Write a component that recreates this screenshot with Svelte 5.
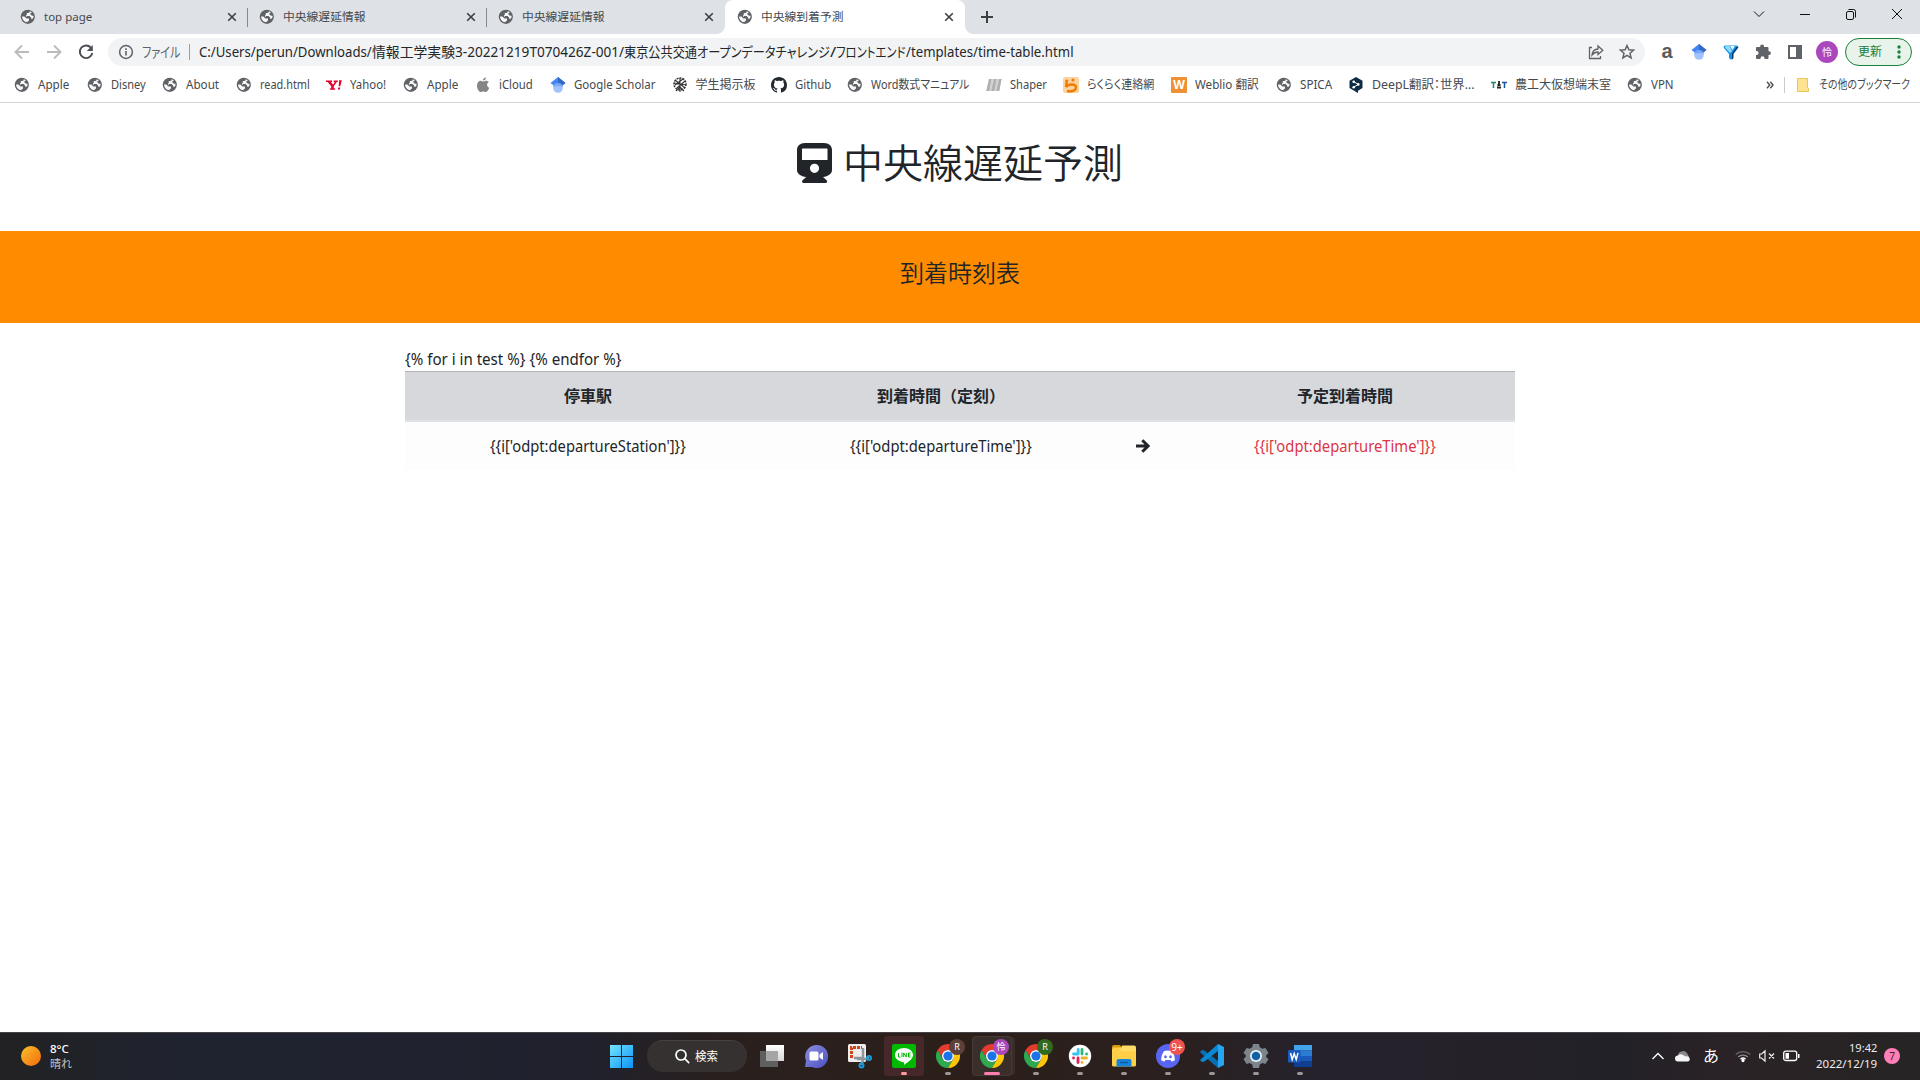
<script>
  const tabs = [
    { title: 'top page', width: 48, slot: 240 },
    { title: '中央線遅延情報', width: 83, slot: 239 },
    { title: '中央線遅延情報', width: 83, slot: 238 },
    { title: '中央線到着予測', width: 83, slot: 240, active: true }
  ];

  const address = [
    { text: 'C:/Users/perun/Downloads/', width: 173 },
    { text: '情報工学実験', width: 83 },
    { text: '3-20221219T070426Z-001/', width: 169 },
    { text: '東京公共交通オープンデータチャレンジ', width: 206 },
    { text: '/', width: 6 },
    { text: 'フロントエンド', width: 70 },
    { text: '/templates/time-table.html', width: 168 }
  ];

  const bookmarks = [
    { text: 'Apple', width: 31, slot: 72.5, icon: 'globe' },
    { text: 'Disney', width: 35, slot: 75.5, icon: 'globe' },
    { text: 'About', width: 33, slot: 74, icon: 'globe' },
    { text: 'read.html', width: 50, slot: 90, icon: 'globe' },
    { text: 'Yahoo!', width: 36, slot: 77, icon: 'yahoo' },
    { text: 'Apple', width: 31, slot: 72, icon: 'globe' },
    { text: 'iCloud', width: 34, slot: 75, icon: 'apple' },
    { text: 'Google Scholar', width: 81, slot: 121.5, icon: 'scholar' },
    { text: '学生掲示板', width: 60, slot: 99.5, icon: 'crest' },
    { text: 'Github', width: 36, slot: 76, icon: 'github' },
    { text: 'Word数式マニュアル', width: 98, slot: 139, icon: 'globe' },
    { text: 'Shaper', width: 37, slot: 77, icon: 'shaper' },
    { text: 'らくらく連絡網', width: 67, slot: 108, icon: 'raku' },
    { text: 'Weblio 翻訳', width: 64, slot: 105, icon: 'weblio' },
    { text: 'SPICA', width: 32, slot: 72, icon: 'globe' },
    { text: 'DeepL翻訳：世界...', width: 103, slot: 143, icon: 'deepl' },
    { text: '農工大仮想端末室', width: 96, slot: 135.5, icon: 'tat' },
    { text: 'VPN', width: 23, slot: 60, icon: 'globe' }
  ];

  const extensions = ['a', 'scholar', 'vee', 'puzzle', 'panel'];

  const apps = [
    { icon: 'taskview' },
    { icon: 'chat' },
    { icon: 'snip' },
    { icon: 'line', state: 'alert' },
    { icon: 'chrome', badge: 'R', tone: 'brown', state: 'open' },
    { icon: 'chrome', badge: '怜', tone: 'purple', state: 'current' },
    { icon: 'chrome', badge: 'R', tone: 'green', state: 'open' },
    { icon: 'slack', state: 'open' },
    { icon: 'folder', state: 'open' },
    { icon: 'discord', badge: '9+', tone: 'red', state: 'open' },
    { icon: 'vscode', state: 'open' },
    { icon: 'gear', state: 'open' },
    { icon: 'word', state: 'open' }
  ];

  // Condenses or widens a label so that it fills the width of its box.
  function fit(node) {
    const natural = node.offsetWidth;
    const target = node.parentElement.clientWidth;
    if (natural) node.style.transform = `scaleX(${target / natural})`;
  }
</script>

{#snippet label(text, width)}
  <span class="label" style:width="{width}px"><span class="ink" use:fit>{text}</span></span>
{/snippet}

{#snippet glyph(name)}
  {#if name === 'globe'}
    <svg width="16" height="16" viewBox="0 0 16 16"><circle cx="7.800" cy="7.800" r="7.100" fill="#5f6368" /><path d="M9.800 2.300Q9.800 4 8.300 4H6.800v1.500q0 .8-.8.900v1.500h4.300q.8 0 .8.800v1h1.100q.7 0 1-.600.500-1 .300-2.400H12L10.300 5.200V4.300q1.300-.1 1.500-.800-.900-.8-2-1.200z" fill="#fff" opacity=".95" /><path d="M2.100 7.600l.1 1.500 1 1.800q1.400 2.200 4.500 2.400v-1.200q1.300 0 1.300-1.200V9.400H6.400L4.400 7.600z" fill="#fff" opacity=".95" /><path d="M6.300 7.100h3.300l1.300 1.400H7.400z" fill="#5f6368" /></svg>
  {:else if name === 'yahoo'}
    <svg width="16" height="16" viewBox="0 0 16 16"><path d="M0 3.500h6v1.400l-1 .1 2 2.800 1.800-2.800-1.100-.1V3.500h4.100v1.400l-1 .2-3 4.100v2l1.300.2v1.300H3.900v-1.300l1.300-.2v-2L1.600 5.100 0 4.900zM13.100 3.300h2.700l-1.500 6h-1.600zM12.300 10.500h2l-.4 2h-2z" fill="#e5002d" /></svg>
  {:else if name === 'apple'}
    <svg width="16" height="16" viewBox="0 0 16 16"><path d="M10.800.4c.2 1.600-1.200 3.200-2.800 3.100C7.800 2 9.200.6 10.800.4zM8.200 4.500c.7 0 1.500-.8 2.800-.8 1.200 0 2.100.6 2.700 1.400-2.400 1.500-2 4.700.5 5.600-.6 1.700-1.900 4.300-3.400 4.300-.9 0-1.400-.6-2.500-.6s-1.600.6-2.500.6C3.800 15 2 11.500 2 8.700c0-3.200 1.900-5 3.900-5 1 0 1.700.8 2.300.8z" fill="#858585" /></svg>
  {:else if name === 'scholar'}
    <svg width="16" height="16" viewBox="0 0 16 16"><circle cx="8" cy="11" r="4.800" fill="#a0c3ff" /><path d="M.5 6 8 0l7.500 6-3.500 2.800a4.800 4.800 0 0 0-8 0z" fill="#4285f4" /><path d="M8 0l7.500 6-3.500 2.800A5 5 0 0 0 8 6.200z" fill="#356ac3" /><path d="M3.200 9.900a4.900 4.900 0 0 1 9.600 0Q8 8 3.200 9.900z" fill="#76a7fa" /></svg>
  {:else if name === 'crest'}
    <svg width="16" height="16" viewBox="0 0 16 16" fill="none" stroke="#333"><circle cx="8" cy="7" r="6" stroke-width="1.500" stroke-dasharray="2 1" /><path d="M3 3l10 8M3 8l8-6M5 11l8-7M8 1v14M2 6l12 2M4 14l4-4 4 4" stroke-width="1.100" /></svg>
  {:else if name === 'github'}
    <svg width="16" height="16" viewBox="0 0 16 16"><path fill="#24292f" d="M8 0C3.580 0 0 3.580 0 8c0 3.540 2.290 6.530 5.470 7.590.4.070.55-.17.55-.38 0-.19-.01-.82-.01-1.490-2.010.37-2.530-.49-2.690-.94-.09-.23-.48-.94-.82-1.130-.28-.15-.68-.52-.01-.53.63-.01 1.080.58 1.230.82.72 1.210 1.870.87 2.330.66.070-.52.28-.87.51-1.070-1.780-.2-3.640-.89-3.640-3.950 0-.87.31-1.590.82-2.150-.08-.2-.36-1.020.08-2.120 0 0 .67-.21 2.200.82.64-.18 1.320-.27 2-.27s1.360.09 2 .27c1.530-1.040 2.200-.82 2.200-.82.44 1.100.16 1.920.08 2.120.51.56.82 1.270.82 2.150 0 3.070-1.870 3.750-3.650 3.950.29.25.54.73.54 1.480 0 1.070-.01 1.930-.01 2.200 0 .21.15.46.55.38A8 8 0 0 0 16 8c0-4.420-3.580-8-8-8z" /></svg>
  {:else if name === 'shaper'}
    <svg width="16" height="16" viewBox="0 0 16 16"><path d="M3 2h12.500l-2.300 12H.3z" fill="#d4d4d4" /><path d="M3 2h2.500L3.300 14h-3zM8 2h2.500L8.300 14h-3zM13 2h2.500l-2.200 12h-3z" fill="#b0b0b0" /></svg>
  {:else if name === 'raku'}
    <svg width="16" height="16" viewBox="0 0 16 16"><rect width="16" height="16" rx="2" fill="#fbd3a0" /><circle cx="10" cy="3" r="1.600" fill="#f07c00" /><path d="M2.500 3.200 5 4.500M3.600 5.200 3 10c2-3 10-3.700 10 .3C13 14 8 14.700 4 14" fill="none" stroke="#f07c00" stroke-width="2.400" /></svg>
  {:else if name === 'weblio'}
    <span class="tile">W</span>
  {:else if name === 'deepl'}
    <svg width="16" height="16" viewBox="0 0 16 16"><path d="M8 0l6.500 3.700v7.400L10 13.700V16l-3-1.700-5.500-3.200V3.700z" fill="#0f2b46" /><path d="M5.500 4.500 10.300 7.400 5.500 10.300" fill="none" stroke="#fff" /><g fill="#fff"><circle cx="5.700" cy="4.700" r="1.300" /><circle cx="10.300" cy="7.400" r="1.300" /><circle cx="5.700" cy="10.200" r="1.300" /></g></svg>
  {:else if name === 'tat'}
    <svg width="16" height="16" viewBox="0 0 16 16"><path d="M0 5.500h5M2.500 5v6" stroke="#16876a" stroke-width="1.500" /><path d="M11 5.500h5M13.500 5v6" stroke="#1b5599" stroke-width="1.500" /><path d="M8 4v3M6 10.500h4M6.500 8h3" stroke="#222" stroke-width="1.800" /></svg>
  {:else if name === 'vee'}
    <svg width="16" height="16" viewBox="0 0 16 16"><path d="M2.500 1.500h11q2.500 0 1.700 2.500L10.500 10v4l-2 1.500h-1L6 14v-4L1 4Q0 1.500 2.500 1.500z" fill="#1491e8" /><path d="M2.500 2h4L9 7 7 9 2 3.500z" fill="#8ddcff" /><path d="M7 2h5L9.500 6z" fill="#eafaff" /><path d="M15.200 3l-5 7v4.500l-1.200.8V9.500l4.500-6.500z" fill="#06335a" /></svg>
  {:else if name === 'puzzle'}
    <svg width="16" height="16" viewBox="0 0 16 16"><path d="M5.200 3V2.300a1.900 1.900 0 0 1 3.800 0V3h3.500q1 0 1 1v3.200h.5a1.900 1.900 0 0 1 0 3.800h-.5V14q0 1-1 1H9.500v-.8a2 2 0 0 0-4 0v.8H2q-1 0-1-1v-3h.6a2 2 0 0 0 0-4H1V4q0-1 1-1z" fill="#5f6368" /></svg>
  {:else if name === 'panel'}
    <svg width="16" height="16" viewBox="0 0 16 16"><path d="M1 1h14v14H1zM3 3v10h6V3z" fill="#5f6368" fill-rule="evenodd" /></svg>
  {:else if name === 'a'}
    <span class="letter-a">a</span>
  {/if}
{/snippet}

{#snippet app(name)}
  <svg width="24" height="24" viewBox="0 0 24 24">
    {#if name === 'taskview'}
      <defs><linearGradient id="tv" x2="0" y2="1"><stop stop-color="#fff" /><stop offset="1" stop-color="#d6d6d6" /></linearGradient></defs>
      <path d="M6 1h18v16H6z" fill="url(#tv)" /><path d="M0 7h18v16H0z" fill="#5f5f5f" /><path d="M6 7h12v10H6z" fill="#a5a5a5" />
    {:else if name === 'chat'}
      <defs><linearGradient id="ch" x2="1" y2="1"><stop stop-color="#8c8fdc" /><stop offset="1" stop-color="#4b50c5" /></linearGradient></defs>
      <path d="M12 1a11.500 11.500 0 1 1-4 22L1 23l1-6A11.500 11.500 0 0 1 12 1z" fill="url(#ch)" /><rect x="5.500" y="7.500" width="9" height="9" rx="1.500" fill="#fff" /><path d="M15.500 10.500 19 8v8l-3.500-2.500z" fill="#fff" />
    {:else if name === 'snip'}
      <rect width="18" height="18" rx="1.500" fill="#eee" /><path d="M3.500 14V3.500H14" fill="none" stroke="#d34519" stroke-width="3" stroke-dasharray="3 1" /><path d="M6 14l8 0M15 4v12l-2 5M9 15h9l3-2" fill="none" stroke="#8f979c" stroke-width="2.500" /><g fill="none" stroke="#169bdc" stroke-width="2"><circle cx="21" cy="14" r="2" /><circle cx="13.500" cy="21.500" r="2" /></g>
    {:else if name === 'line'}
      <rect width="24" height="24" rx="2" fill="#00b900" /><path d="M12 4c5 0 9 3 9 7 0 4-5 7-9 10 0-1 .5-3-1-3-4-.5-8-3-8-7s4-7 9-7z" fill="#fff" /><path d="M6.500 9v4h2M10 8.500V13M11.700 13V9l2.600 4V9M18.500 9h-2v4h2M16.500 11h2" fill="none" stroke="#00b900" />
    {:else if name === 'chrome'}
      <path d="M1.600 6A12 12 0 0 1 22.400 6H12A6 6 0 0 0 6.800 15z" fill="#e33b2e" /><path d="M1.600 6A12 12 0 0 0 12 24l5.200-9A6 6 0 0 1 6.800 15z" fill="#2da94f" /><path d="M22.400 6A12 12 0 0 1 12 24l5.200-9A6 6 0 0 0 12 6z" fill="#fdc60a" /><circle cx="12" cy="12" r="6" fill="#fff" /><circle cx="12" cy="12" r="4.600" fill="#1a73e8" />
    {:else if name === 'slack'}
      <circle cx="12" cy="12" r="11.200" fill="#fff" /><g fill="none" stroke-width="2.800" stroke-linecap="round"><path d="M10.200 5.500v4.500M5.500 10h4.500" stroke="#36c5f0" /><path d="M14 5.500v4.500M18.500 10h.1" stroke="#2eb67d" /><path d="M14 14h4.500M14 18.500v.1" stroke="#ecb22e" /><path d="M10 14v4.500M5.500 14h.1" stroke="#e01e5a" /></g>
    {:else if name === 'folder'}
      <path d="M0 3q0-2 2-2h6l2 3H0z" fill="#d99a09" /><rect y="3.500" width="24" height="19" rx="1.500" fill="#ffcf48" /><path d="M10 1.500h12q2 0 2 2V7H8z" fill="#ffdb6a" /><path d="M4.500 22.500V17q0-2 2-2h11q2 0 2 2v5.500z" fill="#1683d8" /><path d="M8 18.500h8" stroke="#0b5ba5" stroke-width="1.500" />
    {:else if name === 'discord'}
      <circle cx="12" cy="12" r="12" fill="#5865f2" /><path d="M8 7q4-1 8 0 3 4 3 9-2 1.500-3.500 1.500L14.500 16h-5l-1 1.500Q7 17.500 5 16q0-5 3-9z" fill="#fff" /><g fill="#5865f2"><ellipse cx="9.500" cy="12.800" rx="1.300" ry="1.500" /><ellipse cx="14.500" cy="12.800" rx="1.300" ry="1.500" /></g>
    {:else if name === 'vscode'}
      <path d="M0 8l2-2 2.500.5L18 17v7L2.500 10.500z" fill="#0870b4" /><path d="M18 0v7L4.500 17.500 2 18l-2-2z" fill="#0a88d4" /><path d="M18 0l6 3v18l-6 3z" fill="#27a5ee" />
    {:else if name === 'gear'}
      <path d="M9 0h6l.8 3.300 2.600 1.500L21.500 4l3 5-2.300 2.300v2L24.500 15l-3 5-3.100-.9-2.600 1.500L15 24H9l-.8-3.400-2.600-1.500L2.500 20l-3-5 2.300-2.200v-1.600L-.5 9l3-5 3.100.8 2.600-1.500z" fill="#7c858b" /><circle cx="12" cy="12" r="6" fill="#eef3f6" /><circle cx="12" cy="12" r="4.300" fill="#1061a8" />
    {:else if name === 'word'}
      <path d="M6 1h18v5.500H6z" fill="#41a5ee" /><path d="M6 6.500h18V12H6z" fill="#2b7cd3" /><path d="M6 12h18v5.500H6z" fill="#185abd" /><path d="M6 17.500h18V23H6z" fill="#103f91" /><rect y="6" width="12.500" height="12.500" rx="1" fill="#185abd" /><path d="M2.500 9l1.700 6.500L6.200 9.500l2 6L10 9" fill="none" stroke="#fff" stroke-width="1.500" />
    {/if}
  </svg>
{/snippet}

<div class="screen">
  <header class="tabstrip">
    {#each tabs as tab, i}
      <div class="tab" class:active={tab.active} class:divided={i < 2} style:width="{tab.slot}px">
        {@render glyph('globe')}
        {@render label(tab.title, tab.width)}
        <svg class="close" width="10" height="10" viewBox="0 0 10 10"><path d="M1.200 1.200l7.600 7.600M8.800 1.200L1.200 8.800" stroke="#3c4043" stroke-width="1.600" /></svg>
      </div>
    {/each}
    <svg class="newtab" width="14" height="14" viewBox="0 0 14 14"><path d="M7 1v12M1 7h12" stroke="#3c4043" stroke-width="2" /></svg>
    <div class="window-controls">
      <svg width="12" height="12" viewBox="0 0 12 12"><path d="M1 3.500l5 5 5-5" /></svg>
      <svg width="12" height="12" viewBox="0 0 12 12"><path d="M1 6.500h10" /></svg>
      <svg width="12" height="12" viewBox="0 0 12 12"><rect x="1.500" y="3.500" width="7" height="8" rx="1.500" /><path d="M3.500 1.500h5q2 0 2 2v6" /></svg>
      <svg width="12" height="12" viewBox="0 0 12 12"><path d="M1 1l10 10M11 1L1 11" /></svg>
    </div>
  </header>

  <div class="toolbar">
    <div class="nav">
      <svg class="dim" width="16" height="16" viewBox="0 0 16 16"><path d="M15 8H2M8 1.500L1.500 8 8 14.500" /></svg>
      <svg class="dim" width="16" height="16" viewBox="0 0 16 16"><path d="M1 8h13M8 1.500L14.500 8 8 14.500" /></svg>
      <svg width="16" height="16" viewBox="0 0 16 16"><path d="M13.300 4.200A6.300 6.300 0 1 0 14.300 9" /><path d="M14.800 1v6h-6z" fill="#4c5054" stroke="none" /></svg>
    </div>
    <div class="omnibox">
      <svg width="16" height="16" viewBox="0 0 16 16"><circle cx="8" cy="8" r="6.400" fill="none" stroke="#5f6368" stroke-width="1.500" /><path d="M8 7v4.500M8 4.300V6" stroke="#5f6368" stroke-width="1.600" /></svg>
      <div class="scheme">{@render label('ファイル', 38)}</div>
      <div class="url">
        {#each address as part}{@render label(part.text, part.width)}{/each}
      </div>
      <svg class="share" width="16" height="16" viewBox="0 0 16 16"><path d="M4 3.500H1.500v11h11V12M4 11q.5-5.500 6-6V2l4.800 4.200L10 10.500V8Q6.500 8 4 11z" /></svg>
      <svg class="star" width="16" height="16" viewBox="0 0 16 16"><path d="M8 1.500l1.900 4.300 4.700.4-3.600 3.100 1.100 4.600L8 11.400l-4.100 2.500L5 9.300 1.400 6.200l4.700-.4z" /></svg>
    </div>
    <div class="extensions">
      {#each extensions as name}<span class="ext">{@render glyph(name)}</span>{/each}
      <span class="ext"><span class="avatar">怜</span></span>
    </div>
    <div class="update">
      {@render label('更新', 24)}
      <svg width="4" height="16" viewBox="0 0 4 16" fill="#188038"><circle cx="2" cy="3" r="1.700" /><circle cx="2" cy="8" r="1.700" /><circle cx="2" cy="13" r="1.700" /></svg>
    </div>
  </div>

  <div class="bookmarks">
    {#each bookmarks as mark}
      <div class="bookmark" style:width="{mark.slot}px">
        {@render glyph(mark.icon)}
        {@render label(mark.text, mark.width)}
      </div>
    {/each}
    <div class="other">
      <svg width="8" height="8" viewBox="0 0 8 8"><path d="M1 .7L3.700 4 1 7.300M4.300.7L7 4 4.300 7.300" fill="none" stroke="#4c5054" stroke-width="1.400" /></svg>
      <div class="folder">
        <svg width="12" height="14" viewBox="0 0 12 14"><path d="M.5.500h10v9l1 1v3H.5z" fill="#ffe391" stroke="#e8c65a" /></svg>
        {@render label('その他のブックマーク', 91)}
      </div>
    </div>
  </div>

  <main>
    <h1>
      <svg width="35" height="40" viewBox="0 0 35 40"><path fill="#212529" fill-rule="evenodd" d="M8 0h19c5 0 8 3 8 7v20c0 4-4 6.500-9 7l3.700 3.300c1 1.200.3 2.700-1 2.700H6.500c-1.300 0-2-1.500-1-2.700L9.200 34C4 33.500 0 31 0 27V7c0-4 3-7 8-7zM5.500 5.500Q5 5.500 5 6V16.500q0 .5.500.5h24.500q.5 0 .5-.5V6q0-.5-.5-.5zM17.500 20.700a4.600 4.600 0 1 0 0 9.200 4.600 4.600 0 0 0 0-9.200z" /></svg>
      {@render label('中央線遅延予測', 280)}
    </h1>
    <div class="banner"><h4>到着時刻表</h4></div>
    <section class="content">
      <div class="template">{@render label('{% for i in test %} {% endfor %}', 217)}</div>
      <div class="row head">
        <span>停車駅</span><span>到着時間（定刻）</span><span></span><span>予定到着時間</span>
      </div>
      <div class="row">
        <span>{@render label("{{i['odpt:departureStation']}}", 196)}</span>
        <span>{@render label("{{i['odpt:departureTime']}}", 182)}</span>
        <span><svg width="14" height="14" viewBox="0 0 14 14"><path d="M0 7h12M6.300 1.200L12.100 7l-5.800 5.800" fill="none" stroke="#212529" stroke-width="3" /></svg></span>
        <span class="late">{@render label("{{i['odpt:departureTime']}}", 182)}</span>
      </div>
    </section>
  </main>

  <footer class="taskbar">
    <div class="weather">
      <i class="sun"></i>
      <div><b>8°C</b><small>晴れ</small></div>
    </div>
    <div class="dock">
      <span class="slot start"><svg width="23" height="23" viewBox="0 0 23 23"><defs><linearGradient id="win" x2="1" y2="1"><stop stop-color="#74e6ff" /><stop offset="1" stop-color="#0a92f5" /></linearGradient></defs><path d="M0 0h11v11H0zM12 0h11v11H12zM0 12h11v11H0zM12 12h11v11H12z" fill="url(#win)" /></svg></span>
      <div class="search">
        <svg width="15" height="15" viewBox="0 0 15 15" fill="none" stroke="#fff" stroke-width="1.700"><circle cx="6" cy="6" r="5" /><path d="M9.700 9.700l4.500 4.500" /></svg>
        {@render label('検索', 23)}
      </div>
      {#each apps as item}
        <span class="slot {item.state}">
          {@render app(item.icon)}
          {#if item.badge}<em class={item.tone}>{item.badge}</em>{/if}
        </span>
      {/each}
    </div>
    <div class="tray">
      <svg width="12" height="12" viewBox="0 0 12 12"><path d="M.5 9L6 3.500 11.500 9" fill="none" stroke="#fff" stroke-width="1.300" /></svg>
      <svg class="cloud" width="16" height="12" viewBox="0 0 16 12"><path d="M3 6a5 4.500 0 0 1 9-3l2 4H4z" fill="#8b8888" /><path d="M3 11.500a3 3 0 0 1 0-6 4 4 0 0 1 5-.5l3 1.500a2.600 2.600 0 1 1 2 5z" fill="#f5f5f5" /></svg>
      <span class="ime">あ</span>
      <svg class="wifi" width="16" height="12" viewBox="0 0 16 12" fill="none" stroke="#aaa" stroke-width="1.300"><path d="M.8 4.500a10.500 10.500 0 0 1 14.400 0" stroke="#6b6767" /><path d="M3.200 7a7 7 0 0 1 9.600 0" stroke="#8e8a8a" /><path d="M5.500 9.200a3.600 3.600 0 0 1 5 0" stroke="#fff" /><circle cx="8" cy="10.500" r="1" fill="#fff" stroke="#fff" /></svg>
      <svg class="sound" width="16" height="12" viewBox="0 0 16 12" fill="none" stroke="#eee" stroke-width="1.200"><path d="M.7 4h2L6 .8v10.400L2.700 8h-2zM10 3.500l5 5M15 3.500l-5 5" /></svg>
      <svg class="battery" width="17" height="12" viewBox="0 0 17 12"><rect x=".7" y="1.200" width="13" height="9.300" rx="2" fill="none" stroke="#fff" stroke-width="1.300" /><path d="M2.500 3H6v5.700H2.500zM15 4h1.500v4H15z" fill="#fff" /></svg>
      <div class="clock">{@render label('19:42', 28)}{@render label('2022/12/19', 61)}</div>
      <span class="notice">7</span>
    </div>
  </footer>
</div>

<style>
  :global(body) { margin: 0; overflow: hidden; }
  .screen {
    width: 1920px;
    height: 1080px;
    display: flex;
    flex-direction: column;
    background: #fff;
    color: #212529;
    font-family: "Noto Sans", "Noto Sans CJK JP", sans-serif;
    font-size: 12px;
    line-height: 16px;
  }
  .screen * { box-sizing: border-box; }
  svg { display: block; flex: none; overflow: visible; }
  .label { display: inline-flex; flex: none; white-space: nowrap; }
  .ink { flex: none; transform-origin: 0 50%; font-feature-settings: "palt"; }

  .tabstrip { height: 34px; flex: none; display: flex; align-items: center; padding-left: 8px; background: #dee1e6; }
  .tab { height: 34px; display: flex; flex: none; align-items: center; gap: 8px; padding: 0 11px 0 12px; color: #45494d; font-size: 11.500px; }
  .tab + .tab:not(.active) { padding-left: 11px; }
  .divided { background: linear-gradient(#85888c, #85888c) right center / 1px 19px no-repeat; }
  .tab .close { margin-left: auto; }
  .active { position: relative; background: #fff; border-radius: 8px 8px 0 0; }
  .active::before, .active::after { content: ""; position: absolute; bottom: 0; width: 8px; height: 8px; }
  .active::before { left: -8px; background: radial-gradient(circle at 0 0, transparent 7.500px, #fff 8px); }
  .active::after { right: -8px; background: radial-gradient(circle at 100% 0, transparent 7.500px, #fff 8px); }
  .newtab { margin-left: 15px; }
  .window-controls { display: flex; gap: 34px; margin: 0 17px 6px auto; }
  .window-controls svg { fill: none; stroke: #111; }

  .toolbar { height: 36px; flex: none; display: flex; align-items: center; }
  .nav { width: 108px; display: flex; gap: 16px; padding-left: 14px; }
  .nav svg { fill: none; stroke: #4c5054; stroke-width: 1.900; }
  .nav .dim { stroke: #b9bbbd; }
  .omnibox { width: 1537px; height: 28px; display: flex; align-items: center; padding: 0 10px; border-radius: 14px; background: #f1f3f4; font-size: 14px; }
  .scheme { display: flex; width: 56px; height: 16px; padding-left: 8px; margin-right: 9px; color: #5f6368; border-right: 1px solid #9a9da1; }
  .url { display: flex; align-items: center; color: #24272a; }
  .share, .star { fill: none; stroke: #5f6368; stroke-width: 1.300; }
  .share { margin-left: auto; }
  .star { margin-left: 15px; }
  .star path { stroke-width: 1.500; }
  .extensions { display: flex; margin-left: 6px; }
  .ext { width: 32px; display: flex; align-items: center; justify-content: center; }
  .letter-a { font: bold 20px/20px "Liberation Sans", sans-serif; color: #5b5b5b; margin-top: -3px; }
  .avatar { width: 22px; height: 22px; border-radius: 50%; background: #ab47bc; color: #fff; font-size: 10px; line-height: 22px; text-align: center; }
  .update { width: 67px; height: 28px; margin-left: 2px; display: flex; align-items: center; justify-content: space-between; padding: 0 10px 0 12px; border: 1px solid #188038; border-radius: 14px; background: #e8f3ec; color: #188038; }

  .bookmarks { height: 33px; flex: none; display: flex; align-items: center; padding: 0 10px 3px 14px; border-bottom: 1px solid #d5d6d8; color: #45494d; }
  .bookmark { display: flex; flex: none; align-items: center; gap: 8px; }
  .tile { width: 16px; height: 16px; flex: none; background: #ee9135; border-radius: 1px; color: #fff; font: bold 12px/16px "Noto Sans", sans-serif; text-align: center; }
  .other { margin-left: auto; display: flex; align-items: center; gap: 10px; }
  .folder { display: flex; align-items: center; gap: 10px; padding-left: 12px; border-left: 1px solid #c9cccf; }

  main { height: 929px; flex: none; }
  h1 { height: 128px; margin: 0; padding-top: 40px; display: flex; justify-content: center; gap: 11px; font-family: "Noto Sans CJK JP", sans-serif; font-size: 40px; line-height: 37px; font-weight: 350; }
  h1 .ink { font-feature-settings: normal; }
  .banner { height: 92px; background: #ff8c00; text-align: center; }
  h4 { margin: 0; padding-top: 26px; font-family: "Noto Sans CJK JP", sans-serif; font-size: 24px; line-height: 30px; font-weight: 350; }
  .content { width: 1110px; margin: 0 auto; padding-top: 24px; font-size: 16px; line-height: 24px; }
  .template { height: 24px; }
  .row { height: 48px; display: grid; grid-template-columns: 366px 340px 64px 340px; background: #fdfdfd; }
  .row > span { display: flex; align-items: center; justify-content: center; }
  .head { height: 51px; background: #d6d8db; border-top: 1px solid #b3b7bb; border-bottom: 2px solid #dee2e6; font-weight: 700; }
  .late { color: #dc3545; }

  .taskbar { height: 48px; flex: none; display: flex; align-items: center; padding-bottom: 1px; border-top: 1px solid #454346; color: #fff; background: linear-gradient(90deg, #222223 0, #1f2330 190px, #20212d 580px, #29201e 720px, #2c1f1a 950px, #2a201f 1180px, #26222c 1300px, #232128 1620px, #2a2226 1730px, #262424 1920px) border-box; }
  .weather { width: 600px; display: flex; gap: 9px; padding-left: 21px; align-items: center; }
  .weather div { display: flex; flex-direction: column; }
  .weather b { font-size: 11.500px; line-height: 15px; font-weight: 500; }
  .weather small { font-size: 11px; line-height: 16px; color: #c4c4c5; }
  .sun { width: 20px; height: 20px; border-radius: 50%; background: linear-gradient(135deg, #f9c12e, #f26a0b); }
  .dock { display: flex; align-items: center; }
  .search { width: 100px; height: 32px; margin: 0 3px; display: flex; align-items: center; gap: 5px; padding-left: 28px; border-radius: 16px; background: #343130; border-top: 1px solid #44413f; }
  .slot { position: relative; width: 44px; height: 40px; display: flex; align-items: center; justify-content: center; }
  .start { padding-right: 1px; }
  .alert, .current { width: 40px; margin: 0 2px; border-radius: 4px; background: #46282a; }
  .current { background: #3a2e2a; box-shadow: inset 0 0 0 1px #483b37, 4px 0 0 -1px #3a2d29; }
  .open::after, .alert::after, .current::after { content: ""; position: absolute; bottom: 1px; width: 6px; height: 3px; border-radius: 2px; background: #9b9797; }
  .alert::after { background: #ff9ba5; }
  .current::after { width: 16px; background: #ff7eb0; }
  em { position: absolute; top: 3px; left: 23px; width: 16px; height: 16px; border-radius: 50%; font-style: normal; font-size: 9px; line-height: 16px; text-align: center; }
  .current em { left: 21px; }
  .brown { background: #5d4037; }
  .purple { background: #ab47bc; }
  .green { background: #33691e; }
  .red { background: #ef5350; font-size: 10px; }
  .tray { margin-left: auto; margin-right: 20px; display: flex; align-items: center; }
  .cloud { margin-left: 11px; }
  .ime { width: 16px; margin-left: 12px; font-size: 16px; }
  .wifi { margin-left: 16px; }
  .sound { margin-left: 8px; }
  .battery { margin-left: 8px; }
  .clock { width: 61px; margin: 0 7px 0 16px; display: flex; flex-direction: column; align-items: flex-end; font-size: 11.500px; color: #eee; }
  .notice { width: 16px; height: 16px; border-radius: 50%; background: #ff7eb6; color: #3a2030; font-size: 10px; text-align: center; }
</style>
